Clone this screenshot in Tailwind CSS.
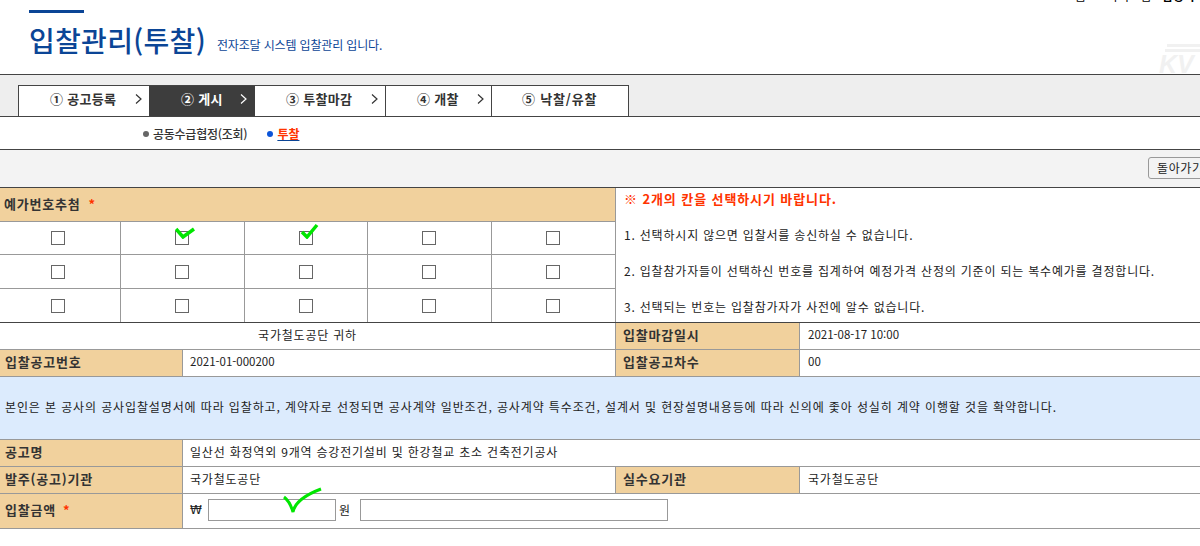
<!DOCTYPE html>
<html lang="ko">
<head>
  <meta charset="UTF-8">
  <title>입찰관리(투찰)</title>
  <script src="https://cdn.jsdelivr.net/npm/@tailwindcss/browser@4"></script>
</head>
<body class="bg-white text-[#333] text-[12px] overflow-hidden font-['Noto_Sans_CJK_KR','Liberation_Sans',sans-serif]">
<div class="relative w-[1200px] h-[546px] overflow-hidden">
  <!-- cut off util text at the very top -->
  <div class="absolute left-[1075px] top-[-11px] flex text-[12px] leading-[14px] text-black whitespace-nowrap">
    <span class="w-[32px]">홈</span><span class="w-[55px]">사이트맵</span><span class="font-bold">담당자 안내</span>
  </div>

  <!-- title -->
  <header class="relative h-[74px] pl-[29px]">
    <div class="absolute left-[29px] top-[10px] w-[55px] h-[3px] bg-[#0b4596]"></div>
    <div class="flex items-end pt-[24px]">
      <h1 class="text-[28px] leading-[32px] font-medium tracking-[0.3px] text-[#0b4596]">입찰관리(투찰)</h1>
      <span class="ml-[11px] mb-[4px] text-[12px] leading-[14px] tracking-[-0.15px] text-[#0b4596]">전자조달 시스템 입찰관리 입니다.</span>
    </div>
    <!-- KR logo watermark -->
    <svg class="absolute left-[1164px] top-[43px] w-[36px] h-[12px]" viewBox="0 0 36 12" fill="#f1f1f1"><path d="M3 1h33v3H3zM1 6h35v3H1z"/></svg>
    <div class="absolute left-[1159px] top-[52px] text-[25px] leading-[24px] font-bold italic text-[#f1f1f1] font-['Liberation_Sans',sans-serif]">KV</div>
  </header>

  <!-- steps -->
  <nav class="h-[43px] bg-[#eeeeee] border-y border-[#444] pl-[18px] pt-[10px]">
    <ul class="flex h-[31px] w-[611px] border border-b-0 border-[#444] bg-white font-bold text-[13px] tracking-[0.3px] text-[#333]">
      <li class="w-[130px] pl-[31px] pb-[4px] flex items-center justify-between pr-[7px]">① 공고등록
        <svg class="w-[7px] h-[10px]" viewBox="0 0 7 10" fill="none" stroke="currentColor" stroke-width="1.2"><path d="M1 .5l5 4.500-5 4.500"/></svg>
      </li>
      <li class="w-[106px] pl-[32px] pb-[4px] flex items-center justify-between pr-[8px] bg-[#3d3d3d] text-white">② 게시
        <svg class="w-[7px] h-[10px]" viewBox="0 0 7 10" fill="none" stroke="currentColor" stroke-width="1.2"><path d="M1 .5l5 4.500-5 4.500"/></svg>
      </li>
      <li class="w-[131px] pl-[31px] pb-[4px] flex items-center justify-between pr-[7px] border-r border-[#444]">③ 투찰마감
        <svg class="w-[7px] h-[10px]" viewBox="0 0 7 10" fill="none" stroke="currentColor" stroke-width="1.2"><path d="M1 .5l5 4.500-5 4.500"/></svg>
      </li>
      <li class="w-[106px] pl-[31px] pb-[4px] flex items-center justify-between pr-[7px] border-r border-[#444]">④ 개찰
        <svg class="w-[7px] h-[10px]" viewBox="0 0 7 10" fill="none" stroke="currentColor" stroke-width="1.2"><path d="M1 .5l5 4.500-5 4.500"/></svg>
      </li>
      <li class="flex-1 pl-[30px] pb-[4px] flex items-center tracking-[0.8px]">⑤ 낙찰/유찰</li>
    </ul>
  </nav>

  <!-- sub tabs -->
  <div class="h-[33px] border-b border-[#444] flex items-center pl-[143px] pt-[1px]">
    <span class="w-[6px] h-[6px] rounded-full bg-[#666] mr-[4px]"></span>
    <span class="text-[12px] font-medium text-[#333] tracking-[-0.25px]">공동수급협정(조회)</span>
    <span class="w-[6px] h-[6px] rounded-full bg-[#0b55d9] ml-[20px] mr-[4px]"></span>
    <a class="font-bold text-[12px] text-[#ff3300] underline decoration-[#0b4596]">투찰</a>
  </div>

  <!-- button bar -->
  <div class="h-[38px] bg-[#f3f3f3] border-b border-[#444] relative">
    <button class="absolute left-[1148px] top-[7px] w-[70px] h-[22px] text-left pl-[8px] bg-[#f3f3f3] border border-[#999] rounded-[3px] text-[12px] tracking-[0.6px] text-[#222]">돌아가기</button>
  </div>

  <!-- lottery block -->
  <section class="flex h-[135px] border-b border-[#444]">
    <div class="w-[616px] border-r border-[#999] shrink-0">
      <div class="h-[34px] bg-[#f1d19d] border-b border-[#999] flex items-center pl-[4px] pb-[1px] font-bold text-[13px] tracking-[0.8px] text-[#333]">예가번호추첨 <span class="text-[#ff3300] ml-[8px]">*</span></div>
      <div class="grid grid-cols-[121px_124px_123px_124px_123px] grid-rows-[33px_34px_33px] h-[100px]">
        <div class="pr-[5px] border-r border-b border-[#999] flex items-center justify-center"><span class="w-[14px] h-[14px] border border-[#666]"></span></div>
        <div class="relative pr-[2px] border-r border-b border-[#999] flex items-center justify-center"><span class="w-[14px] h-[14px] border border-[#666]"></span>
          <svg class="absolute left-[54px] top-[5px] w-[20px] h-[12px]" viewBox="0 0 20 12" fill="none" stroke="#00e600" stroke-width="3.500"><path d="M1 2l7 8L19 2"/></svg>
        </div>
        <div class="relative border-r border-b border-[#999] flex items-center justify-center"><span class="w-[14px] h-[14px] border border-[#666]"></span>
          <svg class="absolute left-[55px] top-[1px] w-[19px] h-[16px]" viewBox="0 0 19 16" fill="none" stroke="#00e600" stroke-width="3.500"><path d="M2 9l5 5L17 2"/></svg>
        </div>
        <div class="pr-[2px] border-r border-b border-[#999] flex items-center justify-center"><span class="w-[14px] h-[14px] border border-[#666]"></span></div>
        <div class="pr-[2px] border-b border-[#999] flex items-center justify-center"><span class="w-[14px] h-[14px] border border-[#666]"></span></div>

        <div class="pr-[5px] border-r border-b border-[#999] flex items-center justify-center"><span class="w-[14px] h-[14px] border border-[#666]"></span></div>
        <div class="pr-[2px] border-r border-b border-[#999] flex items-center justify-center"><span class="w-[14px] h-[14px] border border-[#666]"></span></div>
        <div class="border-r border-b border-[#999] flex items-center justify-center"><span class="w-[14px] h-[14px] border border-[#666]"></span></div>
        <div class="pr-[2px] border-r border-b border-[#999] flex items-center justify-center"><span class="w-[14px] h-[14px] border border-[#666]"></span></div>
        <div class="pr-[2px] border-b border-[#999] flex items-center justify-center"><span class="w-[14px] h-[14px] border border-[#666]"></span></div>

        <div class="pr-[5px] border-r border-[#999] flex items-center justify-center"><span class="w-[14px] h-[14px] border border-[#666]"></span></div>
        <div class="pr-[2px] border-r border-[#999] flex items-center justify-center"><span class="w-[14px] h-[14px] border border-[#666]"></span></div>
        <div class="border-r border-[#999] flex items-center justify-center"><span class="w-[14px] h-[14px] border border-[#666]"></span></div>
        <div class="pr-[2px] border-r border-[#999] flex items-center justify-center"><span class="w-[14px] h-[14px] border border-[#666]"></span></div>
        <div class="pr-[2px] flex items-center justify-center"><span class="w-[14px] h-[14px] border border-[#666]"></span></div>
      </div>
    </div>
    <div class="flex-1 pl-[8px] text-[12px] leading-[14px] tracking-[0.8px] text-[#222]">
      <p class="h-[24px] pt-[4px] text-[13px] font-bold text-[#ff3300] tracking-[0.9px]">※ 2개의 칸을 선택하시기 바랍니다.</p>
      <p class="mt-[16px]">1. 선택하시지 않으면 입찰서를 송신하실 수 없습니다.</p>
      <p class="mt-[22px]">2. 입찰참가자들이 선택하신 번호를 집계하여 예정가격 산정의 기준이 되는 복수예가를 결정합니다.</p>
      <p class="mt-[22px]">3. 선택되는 번호는 입찰참가자가 사전에 알수 없습니다.</p>
    </div>
  </section>

  <!-- info rows -->
  <div class="flex h-[27px] border-b border-[#999] text-[12px] text-[#222]">
    <div class="w-[615px] pb-[2px] flex items-center justify-center tracking-[0.8px]">국가철도공단 귀하</div>
    <div class="w-[185px] bg-[#f1d19d] border-x border-[#999] flex items-center pl-[7px] pb-[2px] font-bold text-[13px] tracking-[0.8px] text-[#333]">입찰마감일시</div>
    <div class="flex-1 flex items-center pl-[8px] pb-[2px] text-[11.500px]">2021-08-17 10:00</div>
  </div>
  <div class="flex h-[27px] border-b border-[#999] text-[12px] text-[#222]">
    <div class="w-[183px] bg-[#f1d19d] border-r border-[#999] flex items-center pl-[5px] pb-[2px] font-bold text-[13px] tracking-[0.8px] text-[#333]">입찰공고번호</div>
    <div class="w-[432px] flex items-center pl-[7px] pb-[2px] text-[11.500px]">2021-01-000200</div>
    <div class="w-[185px] bg-[#f1d19d] border-x border-[#999] flex items-center pl-[7px] pb-[2px] font-bold text-[13px] tracking-[0.8px] text-[#333]">입찰공고차수</div>
    <div class="flex-1 flex items-center pl-[8px] pb-[2px] text-[11.500px]">00</div>
  </div>
  <div class="h-[63px] bg-[#dcebfd] border-b border-[#999] flex items-center pl-[5px] pb-[3px] text-[12px] tracking-[0.88px] text-[#222] whitespace-nowrap">본인은 본 공사의 공사입찰설명서에 따라 입찰하고, 계약자로 선정되면 공사계약 일반조건, 공사계약 특수조건, 설계서 및 현장설명내용등에 따라 신의에 좇아 성실히 계약 이행할 것을 확약합니다.</div>
  <div class="flex h-[27px] border-b border-[#999] text-[12px] text-[#222]">
    <div class="w-[183px] bg-[#f1d19d] border-r border-[#999] flex items-center pl-[5px] pb-[2px] font-bold text-[13px] tracking-[0.8px] text-[#333]">공고명</div>
    <div class="flex-1 flex items-center pl-[7px] pb-[2px] tracking-[0.8px]">일산선 화정역외 9개역 승강전기설비 및 한강철교 초소 건축전기공사</div>
  </div>
  <div class="flex h-[27px] border-b border-[#999] text-[12px] text-[#222]">
    <div class="w-[183px] bg-[#f1d19d] border-r border-[#999] flex items-center pl-[5px] pb-[2px] font-bold text-[13px] tracking-[0.8px] text-[#333]">발주(공고)기관</div>
    <div class="w-[432px] flex items-center pl-[7px] pb-[2px] tracking-[0.8px]">국가철도공단</div>
    <div class="w-[185px] bg-[#f1d19d] border-x border-[#999] flex items-center pl-[7px] pb-[2px] font-bold text-[13px] tracking-[0.8px] text-[#333]">실수요기관</div>
    <div class="flex-1 flex items-center pl-[8px] pb-[2px] tracking-[0.8px]">국가철도공단</div>
  </div>
  <div class="flex h-[35px] border-b border-[#999] text-[12px] text-[#222]">
    <div class="w-[183px] bg-[#f1d19d] border-r border-[#999] flex items-center pl-[5px] pb-[2px] font-bold text-[13px] tracking-[0.8px] text-[#333]">입찰금액 <span class="text-[#ff3300] ml-[7px]">*</span></div>
    <div class="relative flex-1 flex items-center pl-[7px] pb-[2px]">
      <span class="w-[18px] text-[12px] leading-[15px] font-['DejaVu_Sans',sans-serif]">₩</span>
      <input class="w-[128px] h-[22px] border border-[#999] bg-white">
      <span class="ml-[3px] w-[21px]">원</span>
      <input class="w-[308px] h-[22px] border border-[#999] bg-white">
      <svg class="absolute left-[99px] top-[-7px] w-[42px] h-[28px]" viewBox="0 0 42 28" fill="none" stroke="#00e600" stroke-width="3"><path d="M2 10c4 3 7 8 9 15 2-10 12-17 28-23"/></svg>
    </div>
  </div>
</div>
</body>
</html>
